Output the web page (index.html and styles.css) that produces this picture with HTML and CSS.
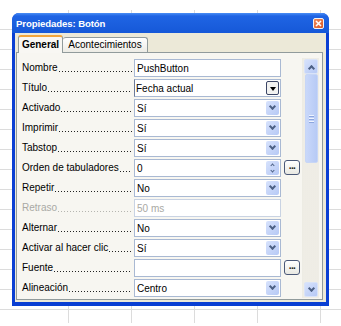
FILE: index.html
```html
<!DOCTYPE html>
<html lang="es">
<head>
<meta charset="utf-8">
<title>Propiedades: Botón</title>
<link rel="stylesheet" href="styles.css">
</head>
<body>
<div class="window">
  <div class="titlebar">
    <span class="title">Propiedades: Botón</span>
    <span class="close"><svg width="7" height="7" viewBox="0 0 7 7"><path d="M1 1 L6 6 M6 1 L1 6" stroke="#fff" stroke-width="1.6" fill="none"/></svg></span>
  </div>
  <div class="body">
    <div class="tabs">
      <div class="tab active">General</div>
      <div class="tab tab-2">Acontecimientos</div>
    </div>
    <div class="panel">
      <div class="rows">
        <div class="row"><div class="lbl"><span>Nombre</span></div><div class="field"><span class="val">PushButton</span></div></div>
        <div class="row"><div class="lbl"><span>Título</span></div><div class="field combo"><span class="val">Fecha actual</span><span class="dd focus"></span></div></div>
        <div class="row"><div class="lbl"><span>Activado</span></div><div class="field"><span class="val">Sí</span><span class="dd"></span></div></div>
        <div class="row"><div class="lbl"><span>Imprimir</span></div><div class="field"><span class="val">Sí</span><span class="dd"></span></div></div>
        <div class="row"><div class="lbl"><span>Tabstop</span></div><div class="field"><span class="val">Sí</span><span class="dd"></span></div></div>
        <div class="row"><div class="lbl"><span>Orden de tabuladores</span></div><div class="field"><span class="val">0</span><span class="spin"><i class="up"></i><i class="down"></i></span></div><span class="more">...</span></div>
        <div class="row"><div class="lbl"><span>Repetir</span></div><div class="field"><span class="val">No</span><span class="dd"></span></div></div>
        <div class="row"><div class="lbl disabled"><span>Retraso</span></div><div class="field off"><span class="val">50 ms</span></div></div>
        <div class="row"><div class="lbl"><span>Alternar</span></div><div class="field"><span class="val">No</span><span class="dd"></span></div></div>
        <div class="row"><div class="lbl"><span>Activar al hacer clic</span></div><div class="field"><span class="val">Sí</span><span class="dd"></span></div></div>
        <div class="row"><div class="lbl"><span>Fuente</span></div><div class="field"><span class="val"></span></div><span class="more">...</span></div>
        <div class="row"><div class="lbl"><span>Alineación</span></div><div class="field"><span class="val">Centro</span><span class="dd"></span></div></div>
      </div>
      <div class="scroll">
        <span class="sbtn up"></span>
        <span class="thumb"><i></i><i></i><i></i></span>
        <span class="track"></span>
        <span class="sbtn down"></span>
      </div>
    </div>
  </div>
</div>
</body>
</html>
```
FILE: styles.css
```css
html {
  background: #fff;
}
body {
  margin: 10px 0 0 0;
  padding: 3px 0 0 12px;
  height: 313px;
  box-sizing: border-box;
  font-family: "Liberation Sans", Arial, sans-serif;
  background-color: #fff;
  background-image:
    repeating-linear-gradient(90deg, transparent 0 62px, #dcdcdc 62px 63px),
    repeating-linear-gradient(180deg, transparent 0 19px, #dcdcdc 19px 20px);
  background-position: 6px 0, 0 0;
}
.window {
  width: 317px;
  height: 293px;
  box-sizing: border-box;
  display: flex;
  flex-direction: column;
  background: #0A3FD3;
  border-radius: 7px 7px 0 0;
  padding: 0 3px 4px 3px;
}
.titlebar {
  height: 20px;
  margin: 0 -3px;
  padding: 0 5px 0 4px;
  display: flex;
  align-items: center;
  justify-content: space-between;
  border-radius: 7px 7px 0 0;
  background: linear-gradient(#4A8EF5 0, #1F64E4 3px, #1B5FDE 55%, #1558D8 100%);
}
.title {
  color: #fff;
  font-weight: bold;
  font-size: 9.6px;
  letter-spacing: -0.1px;
}
.close {
  width: 11px;
  height: 11px;
  box-sizing: border-box;
  border: 1px solid #f4f4f4;
  border-radius: 2px;
  background: linear-gradient(135deg, #F08A5A, #D9592A);
  display: flex;
  align-items: center;
  justify-content: center;
}
.close svg {
  display: block;
}
.body {
  flex: 1;
  background: #ECE9D8;
  padding: 2px 3px 2px 1px;
  display: flex;
  flex-direction: column;
}
.tabs {
  display: flex;
  align-items: flex-end;
  height: 17px;
  padding-left: 2px;
}
.tab {
  box-sizing: border-box;
  height: 15px;
  font-size: 10px;
  line-height: 13px;
  text-align: center;
  border: 1px solid #919B9C;
  border-bottom: none;
  border-radius: 3px 3px 0 0;
  background: linear-gradient(#fff, #ECEBE5);
  color: #000;
}
.tab.active {
  width: 45px;
  height: 18px;
  margin-bottom: -1px;
  position: relative;
  z-index: 1;
  font-weight: bold;
  line-height: 15px;
  border-top: 2px solid #F1A53C;
  background: #F8F7F3;
}
.tab-2 {
  width: 85px;
  border-left: none;
}
.panel {
  flex: 1;
  border: 1px solid #919B9C;
  background: #F7F6F1;
  display: flex;
  gap: 2px;
  padding: 6px 3px 0 5px;
}
.rows {
  width: 278px;
  display: flex;
  flex-direction: column;
}
.row {
  display: flex;
  height: 20px;
}
.lbl {
  width: 110px;
  margin-right: 2px;
  display: flex;
  white-space: nowrap;
  font-size: 10px;
  line-height: 18px;
  color: #000;
}
.lbl::after {
  content: "";
  flex: 1;
  margin-left: 1px;
  background-image: linear-gradient(90deg, #222 1px, transparent 1px);
  background-size: 3px 1px;
  background-repeat: repeat-x;
  background-position: 0 12px;
}
.lbl.disabled {
  color: #A9A9A4;
}
.lbl.disabled::after {
  background-image: linear-gradient(90deg, #B5B5B0 1px, transparent 1px);
}
.field {
  width: 147px;
  height: 18px;
  box-sizing: border-box;
  border: 1px solid #A9B9D3;
  background: #fff;
  display: flex;
  align-items: center;
  padding-left: 2px;
  font-size: 10px;
  color: #000;
}
.field.combo {
  border-left-color: #6C7A98;
  padding-left: 1px;
}
.field.off {
  border-color: #C9D3E3;
  color: #A9A9A4;
}
.val {
  flex: 1;
  white-space: nowrap;
}
.dd {
  width: 13px;
  height: 14px;
  margin-right: 1px;
  box-sizing: border-box;
  border-radius: 2px;
  background: linear-gradient(135deg, #D7E2FC, #B6C9F5);
  display: flex;
  align-items: center;
  justify-content: center;
}
.dd::after {
  content: "";
  width: 3px;
  height: 3px;
  border-right: 2px solid #4D6185;
  border-bottom: 2px solid #4D6185;
  transform: rotate(45deg);
  margin-top: -3px;
}
.dd.focus {
  background: #F2F2F0;
  border: 1px solid #3B4666;
}
.dd.focus::after {
  width: 0;
  height: 0;
  border-left: 3px solid transparent;
  border-right: 3px solid transparent;
  border-top: 4px solid #000;
  border-bottom: none;
  transform: none;
  margin-top: 1px;
}
.spin {
  width: 13px;
  height: 14px;
  margin-right: 1px;
  border-radius: 2px;
  background: linear-gradient(135deg, #D7E2FC, #B6C9F5);
  display: flex;
  flex-direction: column;
  align-items: center;
  justify-content: center;
  gap: 2px;
}
.spin i {
  width: 2px;
  height: 2px;
  border-right: 1.5px solid #4D6185;
  border-bottom: 1.5px solid #4D6185;
}
.spin .up {
  transform: rotate(-135deg);
  margin-top: 2px;
}
.spin .down {
  transform: rotate(45deg);
  margin-bottom: 2px;
}
.more {
  width: 16px;
  height: 15px;
  margin: 1px 0 0 3px;
  box-sizing: border-box;
  border: 1px solid #4A5878;
  border-radius: 3px;
  background: linear-gradient(#FFFFFF, #E8E8E2);
  font-size: 10px;
  line-height: 10px;
  font-weight: bold;
  text-align: center;
  color: #222;
  letter-spacing: -0.6px;
}
.scroll {
  width: 17px;
  height: 240px;
  margin-top: -1px;
  box-sizing: border-box;
  display: flex;
  flex-direction: column;
  align-items: center;
  padding: 1px 0;
  background-color: #F5F4EF;
  background-image: radial-gradient(#E6E4DA 0.6px, transparent 0.8px);
  background-size: 2px 2px;
  border-left: 1px solid #EDECE4;
}
.sbtn {
  width: 14px;
  height: 15px;
  box-sizing: border-box;
  border-radius: 2px;
  border: 1px solid #D9E3F8;
  background: linear-gradient(135deg, #D7E2FC, #B6C9F5);
  display: flex;
  align-items: center;
  justify-content: center;
}
.sbtn::after {
  content: "";
  width: 3px;
  height: 3px;
  border-right: 2px solid #4D6185;
  border-bottom: 2px solid #4D6185;
}
.sbtn.up::after {
  transform: rotate(-135deg);
  margin-top: 3px;
}
.sbtn.down::after {
  transform: rotate(45deg);
  margin-top: -3px;
}
.thumb {
  width: 13px;
  height: 89px;
  box-sizing: border-box;
  border-radius: 2px;
  border: 1px solid #C7D6F6;
  background: linear-gradient(90deg, #C9D8FA, #B7CAF5);
  display: flex;
  flex-direction: column;
  align-items: center;
  justify-content: center;
  gap: 1px;
}
.thumb i {
  width: 5px;
  height: 1px;
  background: #EEF3FE;
  border-bottom: 1px solid #8CA6DE;
}
.track {
  flex: 1;
}
```
